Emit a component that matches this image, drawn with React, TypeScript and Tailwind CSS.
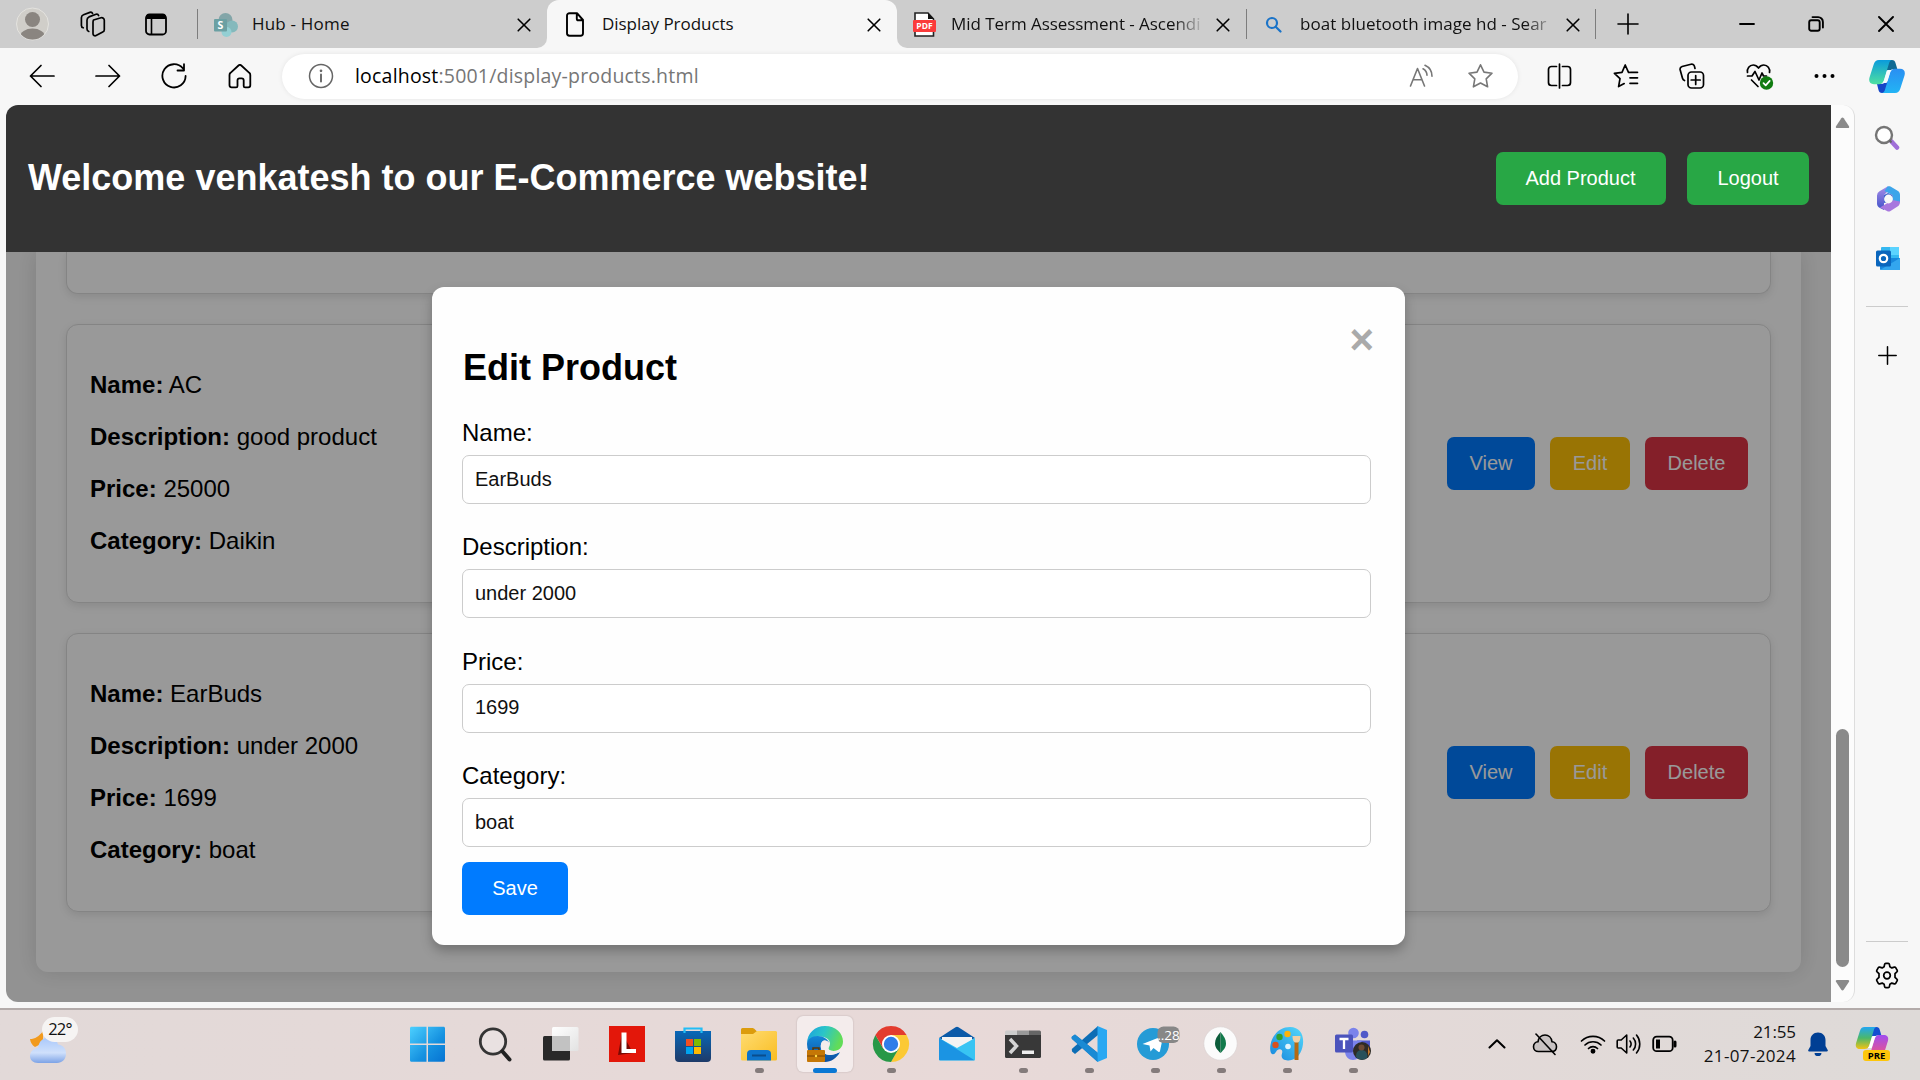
import React from 'react';

type P = { children?: React.ReactNode; className?: string };

const Line = ({ w, h, vb, c = 'stroke-black', sw = 1.5, children }: { w: number; h: number; vb?: string; c?: string; sw?: number; children: React.ReactNode }) => (
  <svg width={w} height={h} viewBox={vb ?? `0 0 ${w} ${h}`} fill="none" strokeWidth={sw} strokeLinecap="round" strokeLinejoin="round" className={`${c} shrink-0`}>
    {children}
  </svg>
);

const Close = ({ className = '' }: P) => (
  <span className={`flex shrink-0 ${className}`}>
    <Line w={14} h={14} sw={1.6}>
      <path d="M1.2 1.2l11.600 11.600M12.800 1.200L1.200 12.800" />
    </Line>
  </span>
);

const TabDivider = ({ className = '' }: P) => <span className={`h-[30px] w-px shrink-0 bg-[#7d7d7d] ${className}`} />;

const TabStrip = () => (
  <div className="flex h-12 w-full bg-[#cdcdcd] font-['Open_Sans',sans-serif] text-[17px] text-[#111]">
    <div className="w-[547px] bg-[#f7f7f7]">
      <div className="flex h-12 items-center rounded-br-[10px] bg-[#cdcdcd] pl-4">
        <svg width="33" height="34" viewBox="0 0 33 34" className="shrink-0">
          <clipPath id="avatar"><circle cx="16.5" cy="17" r="15.5" /></clipPath>
          <circle cx="16.5" cy="17" r="16" fill="#d0cec9" stroke="#e4e3df" />
          <g clipPath="url(#avatar)" fill="#8a8580">
            <circle cx="16.5" cy="12.5" r="7.5" />
            <ellipse cx="16.5" cy="30" rx="12.5" ry="8.5" />
          </g>
        </svg>
        <span className="ml-[31px] flex">
          <Line w={26} h={26} sw={1.7}>
            <path d="M13.5 8.5l7.5-2.2a2.6 2.6 0 0 1 3.3 2.5v9.4c0 1-.6 1.900-1.600 2.300l-6.600 3.600a2.100 2.100 0 0 1-3.100-1.900V10.900c0-1.100.2-2 .5-2.400z" transform="translate(0 .5)" />
            <path d="M8.800 20.500a2.500 2.500 0 0 1-1.800-2.400V9.200c0-1.500.7-2.700 2-3.300l7-2.600c1.200-.4 2.200.2 2.600 1.200" />
            <path d="M3.200 16.800A2.500 2.500 0 0 1 1.400 14.400V6.800C1.400 5.300 2.200 4.300 3.500 3.800l6.400-2.400c1.200-.4 2.200.1 2.600 1" />
          </Line>
        </span>
        <span className="ml-[39px] flex">
          <svg width="22" height="23" viewBox="0 0 22 23"><rect x="1" y="1.500" width="20" height="20" rx="3.500" fill="none" stroke="#000" strokeWidth="1.800" /><path d="M1 6V4a3 3 0 0 1 3-3h14a3 3 0 0 1 3 3v2z" fill="#000" /><path d="M6.500 6v15" stroke="#000" strokeWidth="1.600" /></svg>
        </span>
        <TabDivider className="ml-[30px]" />
        <svg width="24" height="24" viewBox="0 0 24 24" className="ml-4 mt-0.5 shrink-0">
          <circle cx="11.500" cy="7" r="7" fill="#82a5a8" />
          <circle cx="18" cy="13.500" r="6" fill="#84b9bc" />
          <circle cx="12.500" cy="19" r="5" fill="#93cfd3" />
          <rect y="6" width="13" height="12.500" rx="1" fill="#6ba0a3" />
          <text x="6.500" y="16" fontSize="10.500" fontWeight="bold" fill="#fff" textAnchor="middle">S</text>
        </svg>
        <span className="ml-3.5 w-[265px] tracking-[0.2px]">Hub - Home</span>
        <Close className="mt-0.5" />
      </div>
    </div>

    <div className="flex h-12 w-[350px] items-center rounded-t-[12px] bg-[#f7f7f7] pl-[19px]">
      <Line w={18} h={25} sw={1.900}>
        <path d="M3.500 1.200h7.500l6 6.800v13.200a2.500 2.500 0 0 1-2.500 2.500h-11A2.500 2.500 0 0 1 1 21.200V3.700a2.500 2.500 0 0 1 2.500-2.500zM10.800 1.500v5.200c0 1 .6 1.600 1.600 1.600H17" />
      </Line>
      <span className="ml-[18px] w-[265px] tracking-[-0.05px]">Display Products</span>
      <Close className="mt-0.5" />
    </div>

    <div className="flex-1 bg-[#f7f7f7]">
      <div className="flex h-12 items-center rounded-bl-[10px] bg-[#cdcdcd] pl-4">
        <svg width="23" height="25" viewBox="0 0 23 25" className="shrink-0">
          <path d="M2 1h13l5.500 6v17H2z" fill="#fff" stroke="#222" strokeWidth="1.600" />
          <path d="M15 1v6h6z" fill="#111" />
          <rect y="8" width="23" height="12" rx="1" fill="#fb3b3b" />
          <text x="11.500" y="17.200" fontSize="8.500" fontWeight="bold" fill="#fff" textAnchor="middle">PDF</text>
        </svg>
        <span className="ml-[15px] w-[252px] whitespace-nowrap tracking-[-0.05px] [mask-image:linear-gradient(to_right,black_222px,transparent_254px)]">Mid Term Assessment - Ascendi</span>
        <Close className="ml-[13px] mt-0.5" />
        <TabDivider className="ml-4" />
        <span className="ml-[18px] flex">
          <Line w={17} h={17} c="stroke-[#1a73c8]" sw={2.200}>
            <circle cx="7" cy="7" r="5" /><path d="M10.700 10.700l4.800 4.800" />
          </Line>
        </span>
        <span className="ml-[18px] w-[252px] whitespace-nowrap tracking-[0.03px] [mask-image:linear-gradient(to_right,black_225px,transparent_256px)]">boat bluetooth image hd - Sear</span>
        <Close className="ml-3.5 mt-0.5" />
        <TabDivider className="ml-[15px]" />
        <span className="ml-[21px] flex"><Line w={22} h={22} sw={1.600}><path d="M11 1v20M1 11h20" /></Line></span>
        <span className="ml-[100px] flex"><Line w={16} h={16} sw={1.800}><path d="M1 8h14" /></Line></span>
        <span className="ml-[53px] flex">
          <Line w={16} h={16} sw={1.900}><rect x="1.200" y="4.200" width="10.500" height="10.500" rx="2" /><path d="M4.500 1.100h5.500a4.800 4.800 0 0 1 4.900 4.800v5.600" /></Line>
        </span>
        <span className="ml-[54px] flex"><Line w={16} h={16} sw={1.900}><path d="M1 1l14 14M15 1L1 15" /></Line></span>
      </div>
    </div>
  </div>
);

const CopilotMark = ({ id, a, b, c, d }: { id: string; a: string; b: string; c: string; d: string }) => (
  <svg width="36" height="33" viewBox="0 0 36 33" className="shrink-0">
    <defs>
      <linearGradient id={`${id}a`} x1="0" y1="0" x2="0" y2="1"><stop offset="0" stopColor={a} /><stop offset="1" stopColor={b} /></linearGradient>
      <linearGradient id={`${id}b`} x1="0" y1="0" x2="0" y2="1"><stop offset="0" stopColor={c} /><stop offset="1" stopColor={d} /></linearGradient>
    </defs>
    <path d="M18 0h5c2 0 3 1 3.500 3l1.800 6H25c-3 0-4.500 1.500-5.500 4.500L16 7z" fill="#0f6a94" />
    <path d="M18 33h-5c-2 0-3-1-3.500-3L8 24h4c3 0 4-1.500 5-4.500l4 6z" fill="#1546c8" />
    <path d="M10 0h13.500c-2 0-3 1.500-3.700 4L15 20c-1 3-2.300 4.200-5.200 4.200H5c-4 0-5.600-2.700-4.500-6.700L4.500 5C5.500 1.500 7 0 10 0z" fill={`url(#${id}a)`} />
    <path d="M26 33H12.500c2 0 3-1.500 3.700-4L21 13c1-3 2.300-4.200 5.200-4.200H31c4 0 5.600 2.700 4.500 6.700L31.500 28c-1 3.500-2.500 5-5.500 5z" fill={`url(#${id}b)`} />
    <path d="M18.300 10h4.500c-1 .7-1.500 1.800-2 3.200L17.600 23h-4.200c1-.8 1.400-1.700 1.900-3.200z" fill="#f3fbff" />
  </svg>
);

const Toolbar = () => (
  <div className="flex h-[57px] w-full items-center bg-[#f7f7f7] pb-px pl-[29px]">
    <Line w={26} h={24} sw={1.700}><path d="M25 12H1.500M12 1.500L1.500 12L12 22.500" /></Line>
    <span className="ml-10 flex"><Line w={26} h={24} sw={1.700}><path d="M1 12h23.500M14 1.500L24.500 12L14 22.500" /></Line></span>
    <span className="ml-10 flex"><Line w={26} h={26} sw={1.800}><path d="M22 5.500a11.600 11.600 0 1 0 2.600 7.500M23 1.200v6.300h-6.500" /></Line></span>
    <span className="ml-[41px] flex"><Line w={24} h={25} sw={1.800}><path d="M3.500 23.300c-1.100 0-2-.8-2-2V11c0-.9.3-1.600 1-2.200l8-7.300c.8-.7 2-.7 2.800 0l8 7.300c.7.600 1 1.300 1 2.200v10.300c0 1.200-.9 2-2 2h-3.200c-.8 0-1.400-.5-1.400-1.400v-5.600c0-1.100-.9-2-2-2h-2.200c-1.100 0-2 .9-2 2v5.600c0 .9-.6 1.400-1.400 1.400z" /></Line></span>
    <div className="ml-[30px] flex h-[45px] w-[1236px] items-center rounded-full bg-white pl-[26px] shadow-[0_0_5px_rgba(0,0,0,0.08)]">
      <Line w={26} h={26} c="stroke-[#666]" sw={1.500}><circle cx="13" cy="13" r="11.500" /><path d="M13 11.500v7" strokeWidth="1.900" /><circle cx="13" cy="7.800" r=".6" fill="#666" /></Line>
      <span className="ml-[21px] w-[1051px] font-['Open_Sans',sans-serif] text-[19.5px] tracking-[0.2px] text-[#767676]"><span className="text-black">localhost</span>:5001/display-products.html</span>
      <span className="ml-[3px] flex"><Line w={25} h={24} c="stroke-[#777]" sw={1.600}><path d="M1.500 22L8.500 4.500L15.500 22M4 15.800h9M14 4.800a7.500 7.500 0 0 1 4 6.500M16 1.300a12 12 0 0 1 7 11" /></Line></span>
      <span className="ml-[33px] flex"><Line w={27} h={26} c="stroke-[#777]" sw={1.600}><path d="M13.500 1.800l3.500 7.300 8 1.100-5.800 5.600 1.400 8-7.100-3.800-7.100 3.800 1.400-8L2 10.200l8-1.100z" /></Line></span>
    </div>
    <span className="ml-[29px] flex"><Line w={25} h={26} sw={1.700}><path d="M9.500 3.500h-5a3 3 0 0 0-3 3v13a3 3 0 0 0 3 3h5M15.500 3.500h5a3 3 0 0 1 3 3v13a3 3 0 0 1-3 3h-5M12.500 1v24" /></Line></span>
    <span className="ml-[41px] flex"><Line w={26} h={26} sw={1.700}><path d="M16.500 9.300h-1L12.200 2 9 9.300l-7.600 1 5.600 5.300-1.400 8.000 5.600-3.000M17.500 9.300h7M17 14.800h7.500M17 20.300h7.500" /></Line></span>
    <span className="ml-10 flex"><Line w={26} h={27} sw={1.700}><path d="M5.500 17.500C4.300 17 3.800 16.300 3.500 15.200L1.200 7c-.4-1.600.4-3 1.900-3.500L12 1.200c1.600-.4 3 .3 3.400 1.900l.6 2.400" /><rect x="9" y="9" width="15.500" height="16" rx="3.500" /><path d="M16.700 12.500v9M12.200 17h9" /></Line></span>
    <span className="ml-[41px] flex">
      <Line w={28} h={27} sw={1.700}>
        <path d="M1.500 9.500C.8 5.500 3.500 2 7.200 2c2.400 0 4 1.300 5.300 3 1.300-1.700 2.900-3 5.300-3 3.700 0 6.500 3.300 5.700 7.500M1.500 13h4.500l3-4.500 4 8.500 3-7 1.500 3h3M5.500 17l6.500 6.500" />
        <circle cx="20.500" cy="20" r="6.700" fill="#107c10" stroke="none" /><path d="M17.500 20.200l2.200 2.200 4-4.500" stroke="#fff" />
      </Line>
    </span>
    <span className="ml-10 flex"><svg width="21" height="6" viewBox="0 0 21 6"><circle cx="2.500" cy="3" r="2" /><circle cx="10.500" cy="3" r="2" /><circle cx="18.500" cy="3" r="2" /></svg></span>
    <span className="ml-[34px] mt-px flex"><CopilotMark id="cp" a="#0a9bdc" b="#4fe0a0" c="#2a8ff2" d="#22b4f5" /></span>
  </div>
);

const btn = "flex h-[53px] items-center justify-center rounded-[7px] text-[20px] text-white";

const SiteHeader = () => (
  <header className="flex h-[147px] shrink-0 items-center justify-between bg-[#333] pl-[22px] pr-[22px]">
    <h1 className="mb-0.5 text-[36px] font-bold leading-[42px] text-white">Welcome venkatesh to our E-Commerce website!</h1>
    <div className="flex gap-[21px]">
      <button className={`${btn} w-[170px] bg-[#28a745] pb-0.5 pr-px`}>Add Product</button>
      <button className={`${btn} w-[122px] bg-[#28a745] pb-0.5`}>Logout</button>
    </div>
  </header>
);

type Product = { Name: string; Description: string; Price: string; Category: string };
const products: Product[] = [
  { Name: 'AC', Description: 'good product', Price: '25000', Category: 'Daikin' },
  { Name: 'EarBuds', Description: 'under 2000', Price: '1699', Category: 'boat' },
];

const cardBox = 'border border-[#ddd] bg-white shadow-[0_3px_8px_rgba(0,0,0,0.1)]';

const ProductCard = ({ p }: { p: Product }) => (
  <article className={`mb-[30px] flex h-[279px] items-center justify-between rounded-[12px] pl-[23px] pr-[22px] ${cardBox}`}>
    <div className="mb-0.5 flex flex-col gap-6">
      {Object.entries(p).map(([k, v]) => (
        <p key={k} className="text-[24px] leading-7"><b>{k}:</b> {v}</p>
      ))}
    </div>
    <div className="flex gap-[15px]">
      <button className={`${btn} w-[88px] bg-[#007bff] pb-0.5`}>View</button>
      <button className={`${btn} w-20 bg-[#ffc107] pb-0.5`}>Edit</button>
      <button className={`${btn} w-[103px] bg-[#dc3545] pb-0.5`}>Delete</button>
    </div>
  </article>
);

const EditModal = () => (
  <div className="relative h-[658px] w-[973px] rounded-[12px] bg-[#fefefe] p-[30px] shadow-[0_6px_12px_rgba(0,0,0,0.25)]">
    <span className="absolute right-[31px] top-[29px] text-[42px] font-bold leading-[48px] text-[#aaa]">×</span>
    <h2 className="mb-[31px] mt-[30px] pl-px text-[36px] font-bold leading-[41px]">Edit Product</h2>
    {Object.entries(products[1]).map(([k, v], i) => (
      <div key={k} className={i < 3 ? 'h-[114.4px]' : 'h-[99.8px]'}>
        <label className="block text-[24px] leading-7">{k}:</label>
        <div className="mt-2 flex h-[49px] w-[909px] items-center rounded-[7px] border border-[#ccc] bg-white px-3 pb-0.5 text-[20px] text-[#111]">{v}</div>
      </div>
    ))}
    <button className={`${btn} w-[106px] bg-[#007bff]`}>Save</button>
  </div>
);

const SitePage = () => (
  <div className="flex h-[897px] w-[1825px] shrink-0 flex-col overflow-hidden rounded-l-[12px] bg-[#f4f4f4] font-['Liberation_Sans',Arial,sans-serif] text-black">
    <SiteHeader />
    <main className="relative h-[750px] overflow-hidden px-[30px]">
      <section className="h-[720px] rounded-b-[12px] bg-white px-[30px] shadow-[0_0_22px_rgba(0,0,0,0.13)]">
        <div className={`mb-[30px] h-[42px] rounded-b-[12px] border-t-0 ${cardBox}`} />
        {products.map((p) => <ProductCard key={p.Name} p={p} />)}
      </section>
      <div className="absolute inset-0 flex items-start justify-center bg-black/40 pt-[35px]">
        <EditModal />
      </div>
    </main>
  </div>
);

const ScrollBar = () => (
  <div className="flex h-[897px] w-6 shrink-0 flex-col items-center rounded-r-[12px] border-r border-[#ddd] bg-[#fcfcfc] pt-3">
    <svg width="15" height="12" viewBox="0 0 15 12" fill="#8a8a8a"><path d="M6.300 1.200c.6-.9 1.800-.9 2.400 0l5.300 8c.5.900.1 1.800-1 1.800H2c-1.100 0-1.500-.9-1-1.800z" /></svg>
    <div className="mt-[600px] h-[238px] w-[13px] rounded-full bg-[#8a8a8a]" />
    <svg width="15" height="12" viewBox="0 0 15 12" fill="#8a8a8a" className="mt-3"><path d="M6.300 10.800c.6.900 1.800.9 2.400 0l5.300-8c.5-.9.1-1.800-1-1.800H2C.9 1 .5 1.900 1 2.800z" /></svg>
  </div>
);

const SideBar = () => (
  <aside className="flex w-[65px] flex-col items-center pr-px pt-5">
    <svg width="26" height="26" viewBox="0 0 26 26">
      <path d="M17.500 16.500l5.500 6" stroke="#a06fd8" strokeWidth="4.500" strokeLinecap="round" /><circle cx="10" cy="10" r="8" fill="#fff" stroke="#757575" strokeWidth="2.400" /><path d="M15.500 15.500l2 2" stroke="#666" strokeWidth="2" />
    </svg>
    <svg width="25" height="26" viewBox="0 0 25 26" className="ml-0.5 mt-[35px]">
      <defs><linearGradient id="ma" x1="0" y1="0" x2="0" y2="1"><stop offset="0" stopColor="#a78ce8" /><stop offset="1" stopColor="#3f52c8" /></linearGradient></defs>
      <path d="M11.500.6l-8 4.700A5 5 0 0 0 1 9.500v8c0 2 1.200 3.600 3 4.500l4 2V9l7-7z" fill="url(#ma)" />
      <path d="M11.500.6c1-.5 2-.5 3 0l7.500 4.500c1.400.9 2 2.200 2 4v7.400l-7.500-1V9L8.500 5z" fill="#3da5ea" />
      <path d="M24 15.500c0 2.400-.8 4-2.500 5l-7 4.500c-1.200.7-2.400.7-3.500 0L4 21.500 16.500 14z" fill="#a878de" />
      <path d="M8 9v8l8.500-2V9L12 7z" fill="#3f62cc" />
      <circle cx="12.500" cy="13" r="4.400" fill="#f8f8f8" />
    </svg>
    <svg width="25" height="25" viewBox="0 0 25 25" className="ml-0.5 mt-[34px]">
      <rect x="5" y="1" width="18" height="16" rx="1" fill="#35b8f1" /><path d="M14 1h9v8h-9z" fill="#5bd3ff" /><path d="M4 12l20 0v11a1 1 0 0 1-1 1H5a1 1 0 0 1-1-1z" fill="#1687dc" /><path d="M4 24l20-12v11a1 1 0 0 1-1 1z" fill="#33a6ee" /><rect y="4.500" width="15" height="16" rx="1.500" fill="#0a66bd" /><circle cx="7.500" cy="12.500" r="3.700" fill="none" stroke="#fff" strokeWidth="2.200" />
    </svg>
    <span className="mt-[35px] h-px w-[42px] bg-[#ccc]" />
    <span className="mt-[39px] flex"><Line w={19} h={19}><path d="M9.500.8v17.400M.8 9.500h17.400" /></Line></span>
    <span className="mt-[576px] h-px w-[42px] bg-[#ccc]" />
    <span className="mt-5 flex">
      <Line w={26} h={27} sw={1.700}>
        <path d="M10.600 2.300c.1-.6.600-1 1.200-1h2.400c.6 0 1.100.4 1.200 1l.5 2.500 1.900 1.100 2.500-.8c.6-.2 1.100 0 1.400.5l1.500 2.700c.3.500.2 1.100-.3 1.500l-1.900 1.800v3.800l1.900 1.800c.5.400.6 1 .3 1.500l-1.500 2.700c-.3.500-.8.700-1.400.5l-2.500-.8-1.900 1.100-.5 2.500c-.1.600-.6 1-1.200 1h-2.400c-.6 0-1.100-.4-1.200-1l-.5-2.500-1.900-1.100-2.500.8c-.6.200-1.100 0-1.400-.5l-1.500-2.700c-.3-.5-.2-1.100.3-1.500l1.900-1.800v-3.800l-1.900-1.800c-.5-.4-.6-1-.3-1.500l1.500-2.700c.3-.5.8-.7 1.400-.5l2.500.8 1.900-1.100z" /><circle cx="13" cy="13.500" r="3.300" />
      </Line>
    </span>
  </aside>
);

const Ico = ({ children }: P) => <svg width="36" height="36" viewBox="0 0 36 36" className="overflow-visible">{children}</svg>;

const icons: { el: React.ReactNode; dot?: boolean; active?: boolean }[] = [
  { el: <Ico><defs><linearGradient id="win" x1="0" y1="0" x2="1" y2="1"><stop offset="0" stopColor="#4cd0ff" /><stop offset=".6" stopColor="#1591e0" /><stop offset="1" stopColor="#0673d2" /></linearGradient></defs><path transform="translate(-1.500 0)" d="M2 .8h15v16.700H.5V2.300C.5 1.400 1.100.8 2 .8zM18.500.8h15.500c.9 0 1.500.6 1.500 1.500v15.200h-17zM.5 19h16.500v16.700H2c-.9 0-1.500-.6-1.500-1.500zM18.500 19h17v15.200c0 .9-.6 1.500-1.500 1.500H18.500z" fill="url(#win)" /></Ico> },
  { el: <Ico><g transform="translate(-1 0)"><circle cx="17" cy="15.500" r="12.700" fill="#e9e1e1" stroke="#343434" strokeWidth="2.800" /><path d="M26.500 25.500l7 8" stroke="#222" strokeWidth="4" strokeLinecap="round" /></g></Ico> },
  { el: <Ico><defs><linearGradient id="tv" x1="0" y1="0" x2="1" y2="1"><stop offset="0" stopColor="#fff" /><stop offset="1" stopColor="#e2e2e2" /></linearGradient></defs><rect x="0" y="10" width="27" height="24.500" rx="1.500" fill="#292929" /><rect x="9" y="1" width="26.500" height="24" rx="1.500" fill="url(#tv)" /><path d="M9 10h18v15H9z" fill="#c2c2c2" /></Ico> },
  { el: <Ico><path d="M0 0h36v36H0z" fill="#e3170a" /><path d="M13 7L9 29l15-2z" fill="#7a0a04" /><path d="M12.500 6.500h5v16.500H27v4H12.500z" fill="#fff" /></Ico> },
  { el: <Ico><defs><linearGradient id="st" x1="0" y1="0" x2="0" y2="1"><stop offset="0" stopColor="#0868b8" /><stop offset="1" stopColor="#1e3a68" /></linearGradient></defs><path d="M0 5h36v27a4 4 0 0 1-4 4H4a4 4 0 0 1-4-4z" fill="url(#st)" /><path d="M9.500 7V2.500h17V7" fill="none" stroke="#22bdf5" strokeWidth="2.200" /><path d="M11 13h7v7h-7z" fill="#f25022" /><path d="M19 13h7v7h-7z" fill="#7fba00" /><path d="M11 21h7v7h-7z" fill="#00a4ef" /><path d="M19 21h7v7h-7z" fill="#ffb900" /></Ico> },
  { dot: true, el: <Ico><defs><linearGradient id="fo" x1="0" y1="0" x2="1" y2="1"><stop offset="0" stopColor="#ffdc72" /><stop offset="1" stopColor="#f9bd22" /></linearGradient></defs><path d="M0 3.500A1.500 1.500 0 0 1 1.500 2H11c1.500 0 2 .5 3 1.500L16 5.500h18.500A1.500 1.500 0 0 1 36 7v6H0z" fill="#dc9c0c" /><path d="M0 8h12l4-3h18.500A1.500 1.500 0 0 1 36 6.500V33a1.500 1.500 0 0 1-1.500 1.500h-33A1.500 1.500 0 0 1 0 33z" fill="url(#fo)" /><path d="M6 34.500V28a4 4 0 0 1 4-4h16a4 4 0 0 1 4 4v6.500z" fill="#0d74cc" /><path d="M11 29.500h14" stroke="#0a4d8c" strokeWidth="2" /></Ico> },
  { active: true, el: <Ico>
    <defs>
      <linearGradient id="ea" x1="0" y1="0" x2="1" y2=".3"><stop offset="0" stopColor="#1a9fe0" /><stop offset=".5" stopColor="#2bc5c8" /><stop offset="1" stopColor="#62dc58" /></linearGradient>
      <linearGradient id="eb" x1="0" y1="0" x2="0" y2="1"><stop offset="0" stopColor="#1488d8" /><stop offset="1" stopColor="#0c4fa0" /></linearGradient>
    </defs>
    <path d="M0 18C0 7 8 0 18 0c11 0 18 7.500 18 15.500C36 22 31 25 26.500 25c-3 0-5-1-5-2.500 0-1.500 1.500-2.500 1.500-5 0-4-4.500-7-10-7C6 10.500 0 14 0 18z" fill="url(#ea)" />
    <path d="M0 18c0-5 5-8 10.500-8 6 0 11 3.500 11.500 7-1-1.800-3-3-5-2.500-3 1-4 5-2.500 9.500C16.500 29 23 31 33 26c-3 6-9 10-15 10C8 36 0 28 0 18z" fill="url(#eb)" />
    <path d="M14.500 24c-1.500-4.500-.5-8.500 2.500-9.500 2-.5 4 .7 5 2.500.4 2.500-.8 4-.8 5.500 0 1.500 2.300 2.500 5.300 2.500 2.500 0 4.500-.5 6.500-1.500v2.500C23 31 16.500 29 14.500 24z" fill="#f4ecec" />
    <rect y="24" width="18" height="12" rx="1" fill="#c57706" /><path d="M0 30h18" stroke="#7a4500" /><path d="M6 24v-2h6v2" fill="none" stroke="#5b3600" strokeWidth="1.500" /><circle cx="9" cy="30" r="1.200" fill="#ffe14a" />
  </Ico> },
  { dot: true, el: <Ico><path d="M18 9h15.600A18 18 0 0 1 18 36l7.800-13.500z" fill="#fcc934" /><path d="M10.200 22.500L2.400 9A18 18 0 0 0 18 36l7.800-13.500z" fill="#279847" /><path d="M2.400 9l7.800 13.500L18 9h15.600A18 18 0 0 0 2.400 9z" fill="#e33b2e" /><circle cx="18" cy="18" r="9" fill="#fff" /><circle cx="18" cy="18" r="7.200" fill="#2f7de9" /></Ico> },
  { el: <Ico><path d="M0 12L16.500 1.200a3 3 0 0 1 3 0L36 12l-18 9z" fill="#0a5aa8" /><path d="M3 11h30v9L18 30 3 20z" fill="#f3f3f3" /><path d="M0 12l18 10 18-10v21.500a1 1 0 0 1-1 1H1a1 1 0 0 1-1-1z" fill="#38c4f3" /><path d="M0 12l35.500 22.300H1a1 1 0 0 1-1-1z" fill="#1b94e3" /></Ico> },
  { dot: true, el: <Ico><path d="M0 9h36v21.500a1.500 1.500 0 0 1-1.500 1.500h-33A1.500 1.500 0 0 1 0 30.500z" fill="#383838" /><path d="M0 9V6a1.500 1.500 0 0 1 1.500-1.500H12V9z" fill="#ccc" /><path d="M12 4.500h12V9H12z" fill="#999" /><path d="M24 4.500h10.500A1.500 1.500 0 0 1 36 6v3H24z" fill="#666" /><path d="M5 13l6.500 7L5 27" fill="none" stroke="#d5d5d5" strokeWidth="3.500" /><path d="M17 24.500h12v3.500H17z" fill="#eee" /></Ico> },
  { dot: true, el: <Ico><path d="M1 10.500l3-2 23 18.500V36L.8 12.800z" fill="#1579c0" /><path d="M1 25.500l3 2.500L27 9V0L.8 23z" fill="#0c6db5" /><path d="M4 8.500L1 10.500c-.8.700-.8 1.700 0 2.400L26.500 36 27 27z" fill="#1a8ad4" /><path d="M26.500 0L36 4v28l-9.500 4z" fill="#29a8f2" /></Ico> },
  { dot: true, el: <Ico><circle cx="16" cy="18" r="16" fill="#259bd6" /><path d="M5.500 18l19-7.500c1-.3 1.500.2 1.300 1.300L23 25c-.2 1-.9 1.200-1.700.7L16.500 22l-3 3.500-1-6z" fill="#fff" /><rect x="20.500" y=".5" width="22" height="16.500" rx="6" fill="#878787" /><text x="31.500" y="13.500" fontSize="13.500" fill="#fff" textAnchor="middle" fontFamily="Open Sans, sans-serif">..28</text></Ico> },
  { dot: true, el: <Ico><circle cx="17.500" cy="17.500" r="16.700" fill="#fbfbfb" stroke="#d6cfcf" strokeWidth=".6" /><path d="M17.500 6c3.500 4 5.500 7.500 5.500 11.500S20.500 24 17.500 27z" fill="#127a4b" /><path d="M17.500 6c-3.500 4-5.500 7.500-5.500 11.500S14.500 24 17.500 27z" fill="#0b5c3a" /></Ico> },
  { dot: true, el: <Ico><defs><linearGradient id="pa" x1="1" y1="0" x2="0" y2="1"><stop offset="0" stopColor="#55d9fb" /><stop offset="1" stopColor="#1585dd" /></linearGradient></defs><path d="M21 1C31 1 35 9 34 18s-6 16-14.500 16.500c-5 .2-8-2-6.500-7 1-3-.5-5-3.500-4-3 1-3 6-6.500 4.500C-2 24 3 1 21 1z" fill="url(#pa)" /><circle cx="19" cy="20.500" r="2.800" fill="#e2f4fd" /><circle cx="6.500" cy="19" r="3.200" fill="#d9501e" /><circle cx="10.500" cy="11" r="3.200" fill="#30a030" /><circle cx="18.500" cy="8" r="3.200" fill="#fbb30c" /><path d="M25.500 16h4v18h-4z" fill="#b56a12" /><path d="M23.500 10h8c0 4-1 5.500-2.500 6.500h-3c-1.500-1-2.500-2.500-2.500-6.500z" fill="#f0cfa4" /></Ico> },
  { dot: true, el: <Ico><circle cx="18.500" cy="7" r="5.300" fill="#7b83eb" /><circle cx="29.500" cy="8.500" r="3.800" fill="#5059c9" /><path d="M22 14.500h13v10c0 4-3 6-6.500 6S22 27 22 24z" fill="#5059c9" /><path d="M9 14.500h17.500v10C26.500 31 22 34 18 34s-8-3-8-9z" fill="#7b83eb" /><rect y="8.500" width="18" height="18" rx="1.500" fill="#4b53bc" /><path d="M4.500 13h9M9 13v10" stroke="#fff" strokeWidth="2.300" /><circle cx="27" cy="25" r="9" fill="#2f2b26" /><path d="M21 31c0-5 2-7 5.500-7s6 2 6 7.500c-4 3-8 3-11.500-.5z" fill="#28505a" /><circle cx="26.500" cy="21.500" r="3" fill="#6e4a34" /><path d="M33 20l2 6-2 4z" fill="#c77a2a" /></Ico> },
];

const TaskBar = () => (
  <footer className="flex h-[72px] w-full items-start border-t-2 border-[#b3abaa] bg-linear-to-r from-[#e2d9d8] via-[#e8d9d8] to-[#dedad8] font-['Open_Sans',sans-serif] text-[#111]">
    <div className="relative h-[70px] w-[396px]">
      <svg width="50" height="56" viewBox="0 0 50 56" className="ml-[29px] mt-1">
        <defs><linearGradient id="cl" x1="0" y1="0" x2="0" y2="1"><stop offset="0" stopColor="#a9c8fb" /><stop offset=".6" stopColor="#cfe0fb" /><stop offset="1" stopColor="#7da3e6" /></linearGradient></defs>
        <path d="M1 25c5 0 9-2.500 13-8v12l-8 4c-3-2-4.500-4.500-5-8z" fill="#f29a1c" />
        <path d="M9 49C4 49 1 46 1 42s3-7.500 8-8c1-7 5-10.500 11-10.500 5 0 8 3 9 7 5 .5 8 4 8 9 0 6-4 9.500-9 9.500z" fill="url(#cl)" />
      </svg>
      <span className="absolute left-[42px] top-[7px] flex h-[25px] w-9 items-center justify-center rounded-full bg-[#f6f4f3] text-[16.5px] tracking-tighter">22°</span>
    </div>
    <div className="flex">
      {icons.map((it, i) => (
        <div key={i} className="flex h-[70px] w-[66px] flex-col items-center pt-1.5">
          <div className={`flex h-14 w-14 items-center justify-center pb-0 ${it.active ? 'rounded-md bg-[#f4ecec] shadow-[0_0_2px_rgba(0,0,0,0.2)]' : ''}`}>{it.el}</div>
          {it.dot && <span className="-mt-1 h-[5px] w-[9px] rounded-full bg-[#847b7b]" />}
          {it.active && <span className="-mt-1 h-[5px] w-6 rounded-full bg-[#0a78d4]" />}
        </div>
      ))}
    </div>
    <div className="flex h-[68px] flex-1 items-center pl-[102px]">
      <Line w={18} h={10} sw={2}><path d="M1.500 8.500L9 1.200l7.500 7.300" /></Line>
      <span className="ml-[26px] flex"><Line w={26} h={24} sw={1.600}><path d="M6.500 19.500c-3 0-5-2-5-4.800 0-2.700 2-4.700 4.500-4.900C6.500 5.500 9.500 3 13 3s6.500 2.500 7 6.800c2.500.2 4.500 2.200 4.500 4.900 0 2.800-2 4.800-5 4.800z" fill="#c8c2c2" /><path d="M4 2l19 20.500" /></Line></span>
      <span className="ml-[22px] flex"><Line w={26} h={20} sw={1.700}><path d="M1.500 7a16.500 16.500 0 0 1 23 0M5 11a11.500 11.500 0 0 1 16 0M8.500 14.500a6.500 6.500 0 0 1 9 0" /><circle cx="13" cy="17.300" r="1.600" fill="#000" /></Line></span>
      <span className="ml-2.5 flex"><Line w={26} h={22} sw={1.600}><path d="M1.200 8v6c0 .6.400 1 1 1h3l5.500 5V2L5.200 7h-3c-.6 0-1 .4-1 1zM14 8a5 5 0 0 1 0 6M17.300 5a9 9 0 0 1 0 12M20.500 2a14 14 0 0 1 0 18" /></Line></span>
      <span className="ml-2.5 flex"><Line w={26} h={18} sw={1.800}><rect x="1.200" y="1.700" width="19.500" height="14.500" rx="3.500" /><path d="M4 4.500h4v9H4z" fill="#000" stroke="none" /><path d="M23 7v4" strokeWidth="3" /></Line></span>
      <div className="ml-4 flex w-[102px] flex-col items-end pb-px text-[17px] leading-6 tracking-[0.35px]">
        <span className="tracking-[-0.1px]">21:55</span><span>21-07-2024</span>
      </div>
      <svg width="20" height="24" viewBox="0 0 20 24" className="ml-3" fill="#003f94"><path d="M10 .5c4.500 0 7.500 3.300 7.500 7.500v6l2.200 4c.4.800 0 1.500-.9 1.500H1.200c-.9 0-1.300-.7-.9-1.500l2.200-4V8C2.500 3.800 5.500.5 10 .5zM6.500 21h7a3.500 3.200 0 0 1-7 0z" /></svg>
      <div className="relative ml-[27px] h-[34px] w-9">
        <svg width="34" height="30" viewBox="0 0 36 33">
          <defs>
            <linearGradient id="pra" x1="0" y1="0" x2="0" y2="1"><stop offset="0" stopColor="#22a6f2" /><stop offset=".5" stopColor="#4bb86a" /><stop offset="1" stopColor="#f3c313" /></linearGradient>
            <linearGradient id="prb" x1="0" y1="0" x2="0" y2="1"><stop offset="0" stopColor="#a04df0" /><stop offset="1" stopColor="#f5567c" /></linearGradient>
          </defs>
          <path d="M18 0h5c2 0 3 1 3.500 3l1.800 6H25c-3 0-4.500 1.500-5.500 4.500L16 7z" fill="#1450d0" />
          <path d="M10 0h13.500c-2 0-3 1.500-3.700 4L15 20c-1 3-2.300 4.200-5.200 4.200H5c-4 0-5.600-2.700-4.500-6.700L4.500 5C5.500 1.500 7 0 10 0z" fill="url(#pra)" />
          <path d="M26 33H12.500c2 0 3-1.500 3.700-4L21 13c1-3 2.300-4.200 5.200-4.200H31c4 0 5.600 2.700 4.500 6.700L31.500 28c-1 3.500-2.500 5-5.500 5z" fill="url(#prb)" />
          <path d="M18.300 10h4.500c-1 .7-1.500 1.800-2 3.200L17.600 23h-4.200c1-.8 1.400-1.700 1.900-3.200z" fill="#fff" />
        </svg>
        <span className="absolute bottom-0 left-2 flex h-[11px] w-[27px] items-center justify-center rounded-[3px] bg-[#fdc60a] text-[9.5px] font-bold leading-none text-black">PRE</span>
      </div>
    </div>
  </footer>
);

export default function App() {
  return (
    <div className="flex h-[1080px] w-[1920px] flex-col overflow-hidden bg-[#f7f7f7]">
      <TabStrip />
      <Toolbar />
      <div className="flex h-[903px] pl-1.5">
        <SitePage />
        <ScrollBar />
        <SideBar />
      </div>
      <TaskBar />
    </div>
  );
}
